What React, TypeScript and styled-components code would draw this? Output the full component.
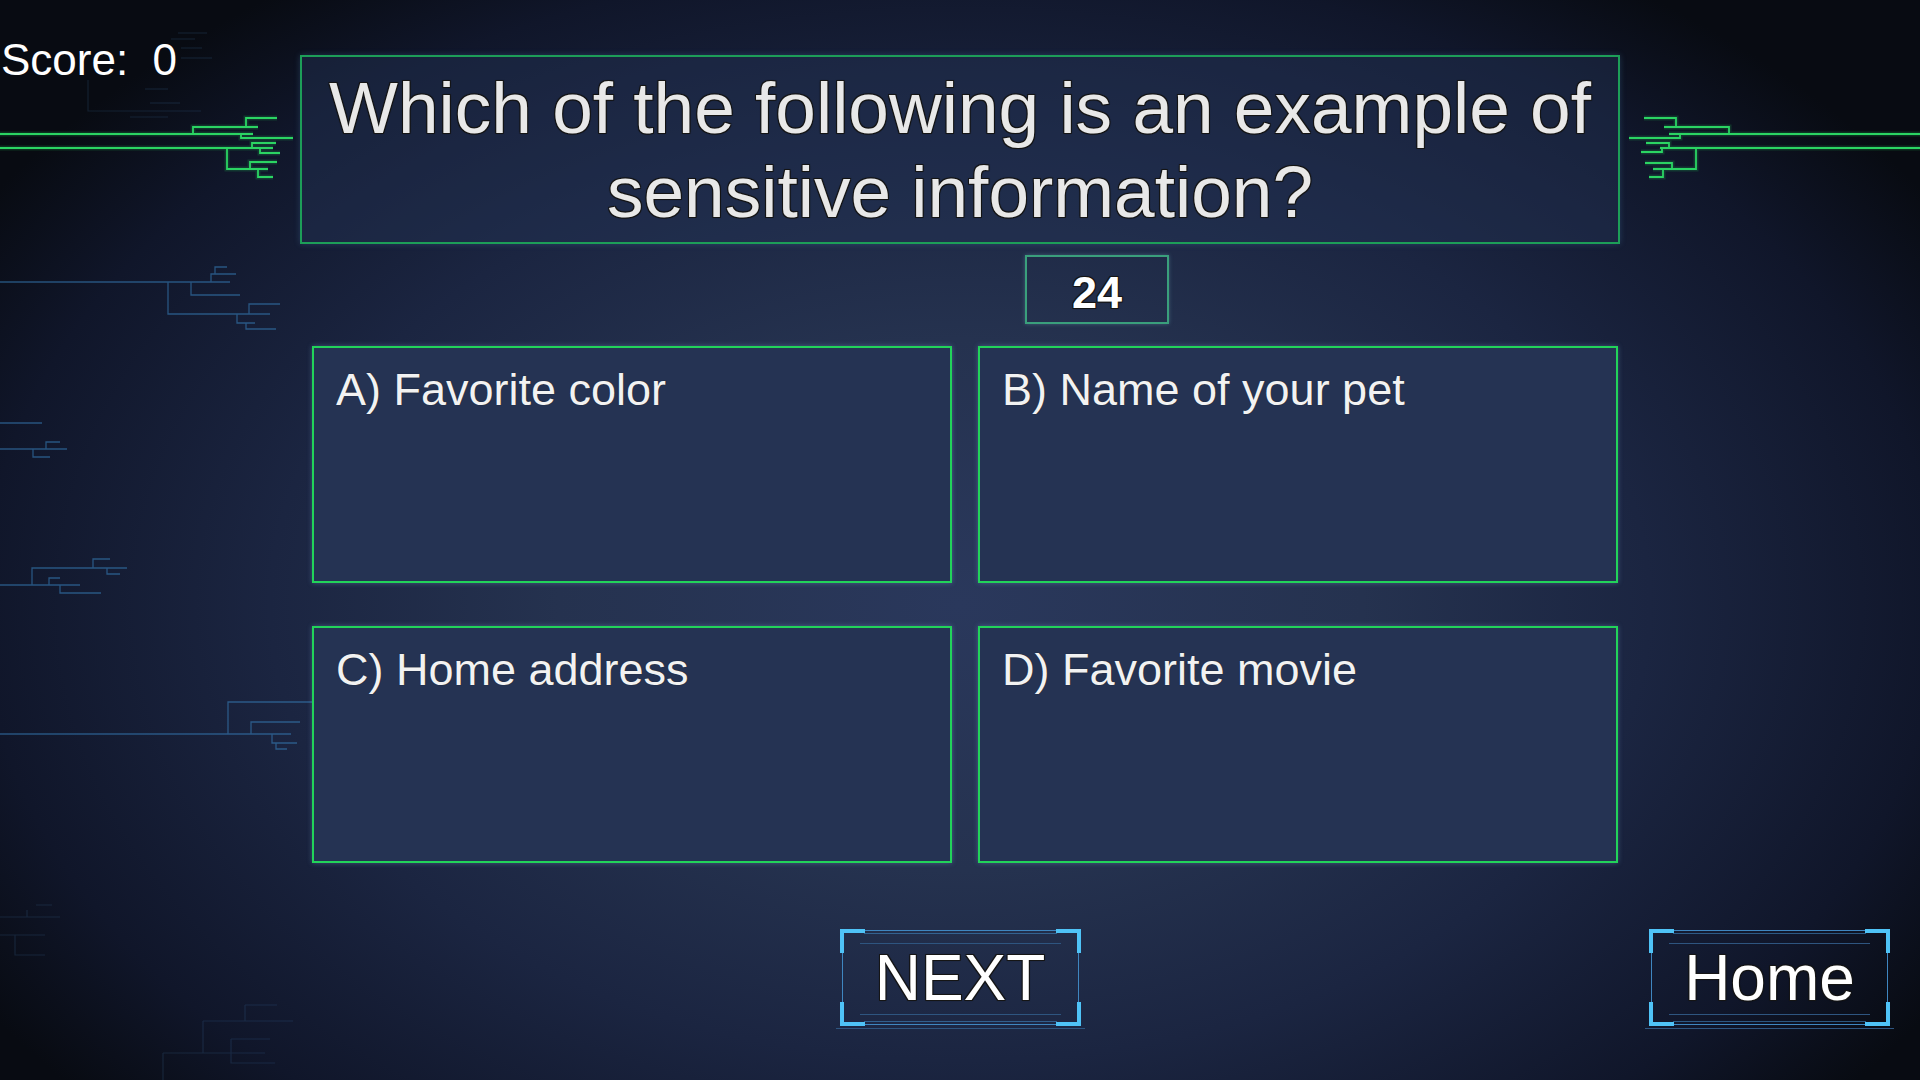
import styled, { createGlobalStyle } from "styled-components";

const GlobalStyle = createGlobalStyle`
  html, body {
    margin: 0;
    padding: 0;
  }
  body {
    background: #0b0f19;
    font-family: "Liberation Sans", Arial, sans-serif;
  }
`;

const outline = `
  -1px -1px 0 #151515, 1px -1px 0 #151515, -1px 1px 0 #151515,
  1px 1px 0 #151515, 0 0 2px #000
`;

const answers = [
  "A) Favorite color",
  "B) Name of your pet",
  "C) Home address",
  "D) Favorite movie",
];

// circuit traces drawn on the background
const greenTraces = [
  "M0 134 H253",
  "M193 134 V127 H258",
  "M246 127 V118 H277",
  "M241 134 V138 H293",
  "M0 148 H273",
  "M252 148 V143 H276",
  "M260 148 V153 H280",
  "M227 148 V169 H268",
  "M250 169 V162 H277",
  "M258 169 V177 H273",
  "M1669 134 H1920",
  "M1729 134 V127 H1664",
  "M1676 127 V118 H1644",
  "M1680 134 V138 H1629",
  "M1660 148 H1920",
  "M1696 148 V169 H1653",
  "M1672 169 V163 H1645",
  "M1663 169 V177 H1649",
  "M1669 148 V143 H1646",
  "M1662 148 V152 H1641",
];

const blueTraces = [
  "M0 282 H230",
  "M168 282 V314 H270",
  "M191 282 V295 H240",
  "M211 282 V274 H236",
  "M215 274 V267 H227",
  "M249 314 V304 H280",
  "M237 314 V323 H255",
  "M246 323 V329 H276",
  "M0 423 H42",
  "M0 449 H67",
  "M46 449 V442 H60",
  "M33 449 V457 H50",
  "M0 585 H80",
  "M32 585 V568 H127",
  "M93 568 V559 H110",
  "M107 568 V574 H120",
  "M49 585 V578 H60",
  "M60 585 V593 H101",
  "M0 734 H291",
  "M228 734 V702 H320",
  "M251 734 V722 H300",
  "M272 734 V743 H297",
  "M276 743 V749 H287",
];

const faintTraces = [
  "M178 33 H207",
  "M171 39 H195",
  "M181 48 H202",
  "M181 58 H212",
  "M88 80 V111 H201",
  "M145 89 H168",
  "M150 103 H180",
  "M130 117 H168",
  "M0 917 H60",
  "M27 910 V917 M36 905 H52",
  "M0 935 H45 M15 935 V955 H45",
  "M245 1005 H277 M245 1005 V1021",
  "M203 1021 H293 M203 1021 V1053",
  "M163 1053 H265 M163 1053 V1080",
  "M231 1039 H270 M231 1039 V1063 H275",
];

export default function App() {
  return (
    <>
      <GlobalStyle />
      <Page>
        <CircuitArt
          width="1920"
          height="1080"
          viewBox="0 0 1920 1080"
          fill="none"
        >
          <g stroke="#5fb4ff" strokeWidth="1.2" opacity="0.12">
            {faintTraces.map((d) => (
              <path key={d} d={d} />
            ))}
          </g>
          <g stroke="#3a86c4" strokeWidth="1.3" opacity="0.55">
            {blueTraces.map((d) => (
              <path key={d} d={d} />
            ))}
          </g>
          <g stroke="#22d35a" strokeWidth="5" opacity="0.18">
            {greenTraces.map((d) => (
              <path key={d} d={d} />
            ))}
          </g>
          <g stroke="#2bd463" strokeWidth="1.8">
            {greenTraces.map((d) => (
              <path key={d} d={d} />
            ))}
          </g>
        </CircuitArt>

        <Content>
          <TopRow>
            <Score>Score:  0</Score>
            <QuestionBox>
              <QuestionText>
                Which of the following is an example of
                <br />
                sensitive information?
              </QuestionText>
            </QuestionBox>
          </TopRow>

          <Timer>24</Timer>

          <AnswerGrid>
            {answers.map((a) => (
              <AnswerCard key={a}>
                <AnswerText>{a}</AnswerText>
              </AnswerCard>
            ))}
          </AnswerGrid>

          <Footer>
            <span />
            <FrameButton>
              <Frame />
              <ButtonLabel>NEXT</ButtonLabel>
            </FrameButton>
            <FrameButton $end>
              <Frame />
              <ButtonLabel>Home</ButtonLabel>
            </FrameButton>
          </Footer>
        </Content>
      </Page>
    </>
  );
}

const Frame = () => (
  <FrameSvg width="241" height="97" viewBox="0 0 241 97" fill="none">
    <g stroke="#3f86c0" strokeWidth="1">
      <path d="M24 1.5 H217" />
      <path d="M24 4.5 H217" opacity="0.6" />
      <path d="M2.5 23 V74" />
      <path d="M238.5 23 V74" />
      <path d="M24 92.5 H217" opacity="0.6" />
      <path d="M24 95.5 H217" />
    </g>
    <g stroke="#2e5580" strokeWidth="1">
      <path d="M20 14.5 H221" />
      <path d="M20 85.5 H221" />
      <path d="M-4 99.5 H245" />
    </g>
    <g stroke="#4fc3f7" strokeWidth="4">
      <path d="M2 24 V2 H25" />
      <path d="M216 2 H239 V24" />
      <path d="M2 73 V95 H25" />
      <path d="M216 95 H239 V73" />
    </g>
  </FrameSvg>
);

const Page = styled.div`
  position: relative;
  width: 1920px;
  height: 1080px;
  overflow: hidden;
  background: radial-gradient(
    ellipse 1150px 760px at 50% 56%,
    #2a385c 0%,
    #25324f 35%,
    #1b2541 60%,
    #10162a 85%,
    #080b12 100%
  );
`;

const CircuitArt = styled.svg`
  position: absolute;
  inset: 0;
  pointer-events: none;
`;

const Content = styled.div`
  position: relative;
  display: flex;
  flex-direction: column;
`;

const TopRow = styled.div`
  display: grid;
  grid-template-columns: 300px 1320px;
`;

const Score = styled.div`
  padding: 35px 0 0 1px;
  font-size: 44px;
  line-height: 1.15;
  color: #ffffff;
  white-space: pre;
`;

const QuestionBox = styled.div`
  margin-top: 55px;
  height: 189px;
  box-sizing: border-box;
  border: 2px solid #1d9e58;
  background: rgba(36, 50, 84, 0.45);
  box-shadow: 0 0 6px rgba(90, 150, 210, 0.25);
  display: flex;
  align-items: center;
  justify-content: center;
`;

const QuestionText = styled.div`
  font-size: 73px;
  line-height: 84px;
  color: #e8e8e8;
  text-align: center;
  text-shadow: ${outline};
  white-space: nowrap;
`;

const Timer = styled.div`
  margin: 11px 0 0 1025px;
  width: 144px;
  height: 69px;
  box-sizing: border-box;
  padding-top: 6px;
  border: 2px solid #3a9f7c;
  box-shadow: 0 0 4px rgba(120, 190, 200, 0.35);
  display: flex;
  align-items: center;
  justify-content: center;
  font-size: 45px;
  font-weight: 700;
  color: #ffffff;
  text-shadow: ${outline};
`;

const AnswerGrid = styled.div`
  margin: 22px 0 0 312px;
  display: grid;
  grid-template-columns: 640px 640px;
  grid-auto-rows: 237px;
  column-gap: 26px;
  row-gap: 43px;
`;

const AnswerCard = styled.div`
  box-sizing: border-box;
  border: 2px solid #22d35a;
  background: #253353;
  box-shadow: 0 0 5px rgba(130, 180, 230, 0.35);
  padding: 16px 22px;
`;

const AnswerText = styled.div`
  font-size: 45px;
  line-height: 1.15;
  color: #f2f2f2;
  text-shadow: 0 0 1px #1a1a1a;
`;

const Footer = styled.div`
  margin-top: 66px;
  display: grid;
  grid-template-columns: 1fr 241px 1fr;
  align-items: start;
`;

const FrameButton = styled.button<{ $end?: boolean }>`
  position: relative;
  justify-self: ${(p) => (p.$end ? "end" : "start")};
  margin-right: ${(p) => (p.$end ? "30px" : "0")};
  width: 241px;
  height: 97px;
  padding: 0;
  border: none;
  background: transparent;
  display: flex;
  align-items: center;
  justify-content: center;
  cursor: pointer;
`;

const FrameSvg = styled.svg`
  position: absolute;
  left: 0;
  top: 0;
  overflow: visible;
`;

const ButtonLabel = styled.span`
  position: relative;
  font-family: "Liberation Sans", Arial, sans-serif;
  font-size: 64px;
  line-height: 1;
  color: #ffffff;
  text-shadow: ${outline};
`;
